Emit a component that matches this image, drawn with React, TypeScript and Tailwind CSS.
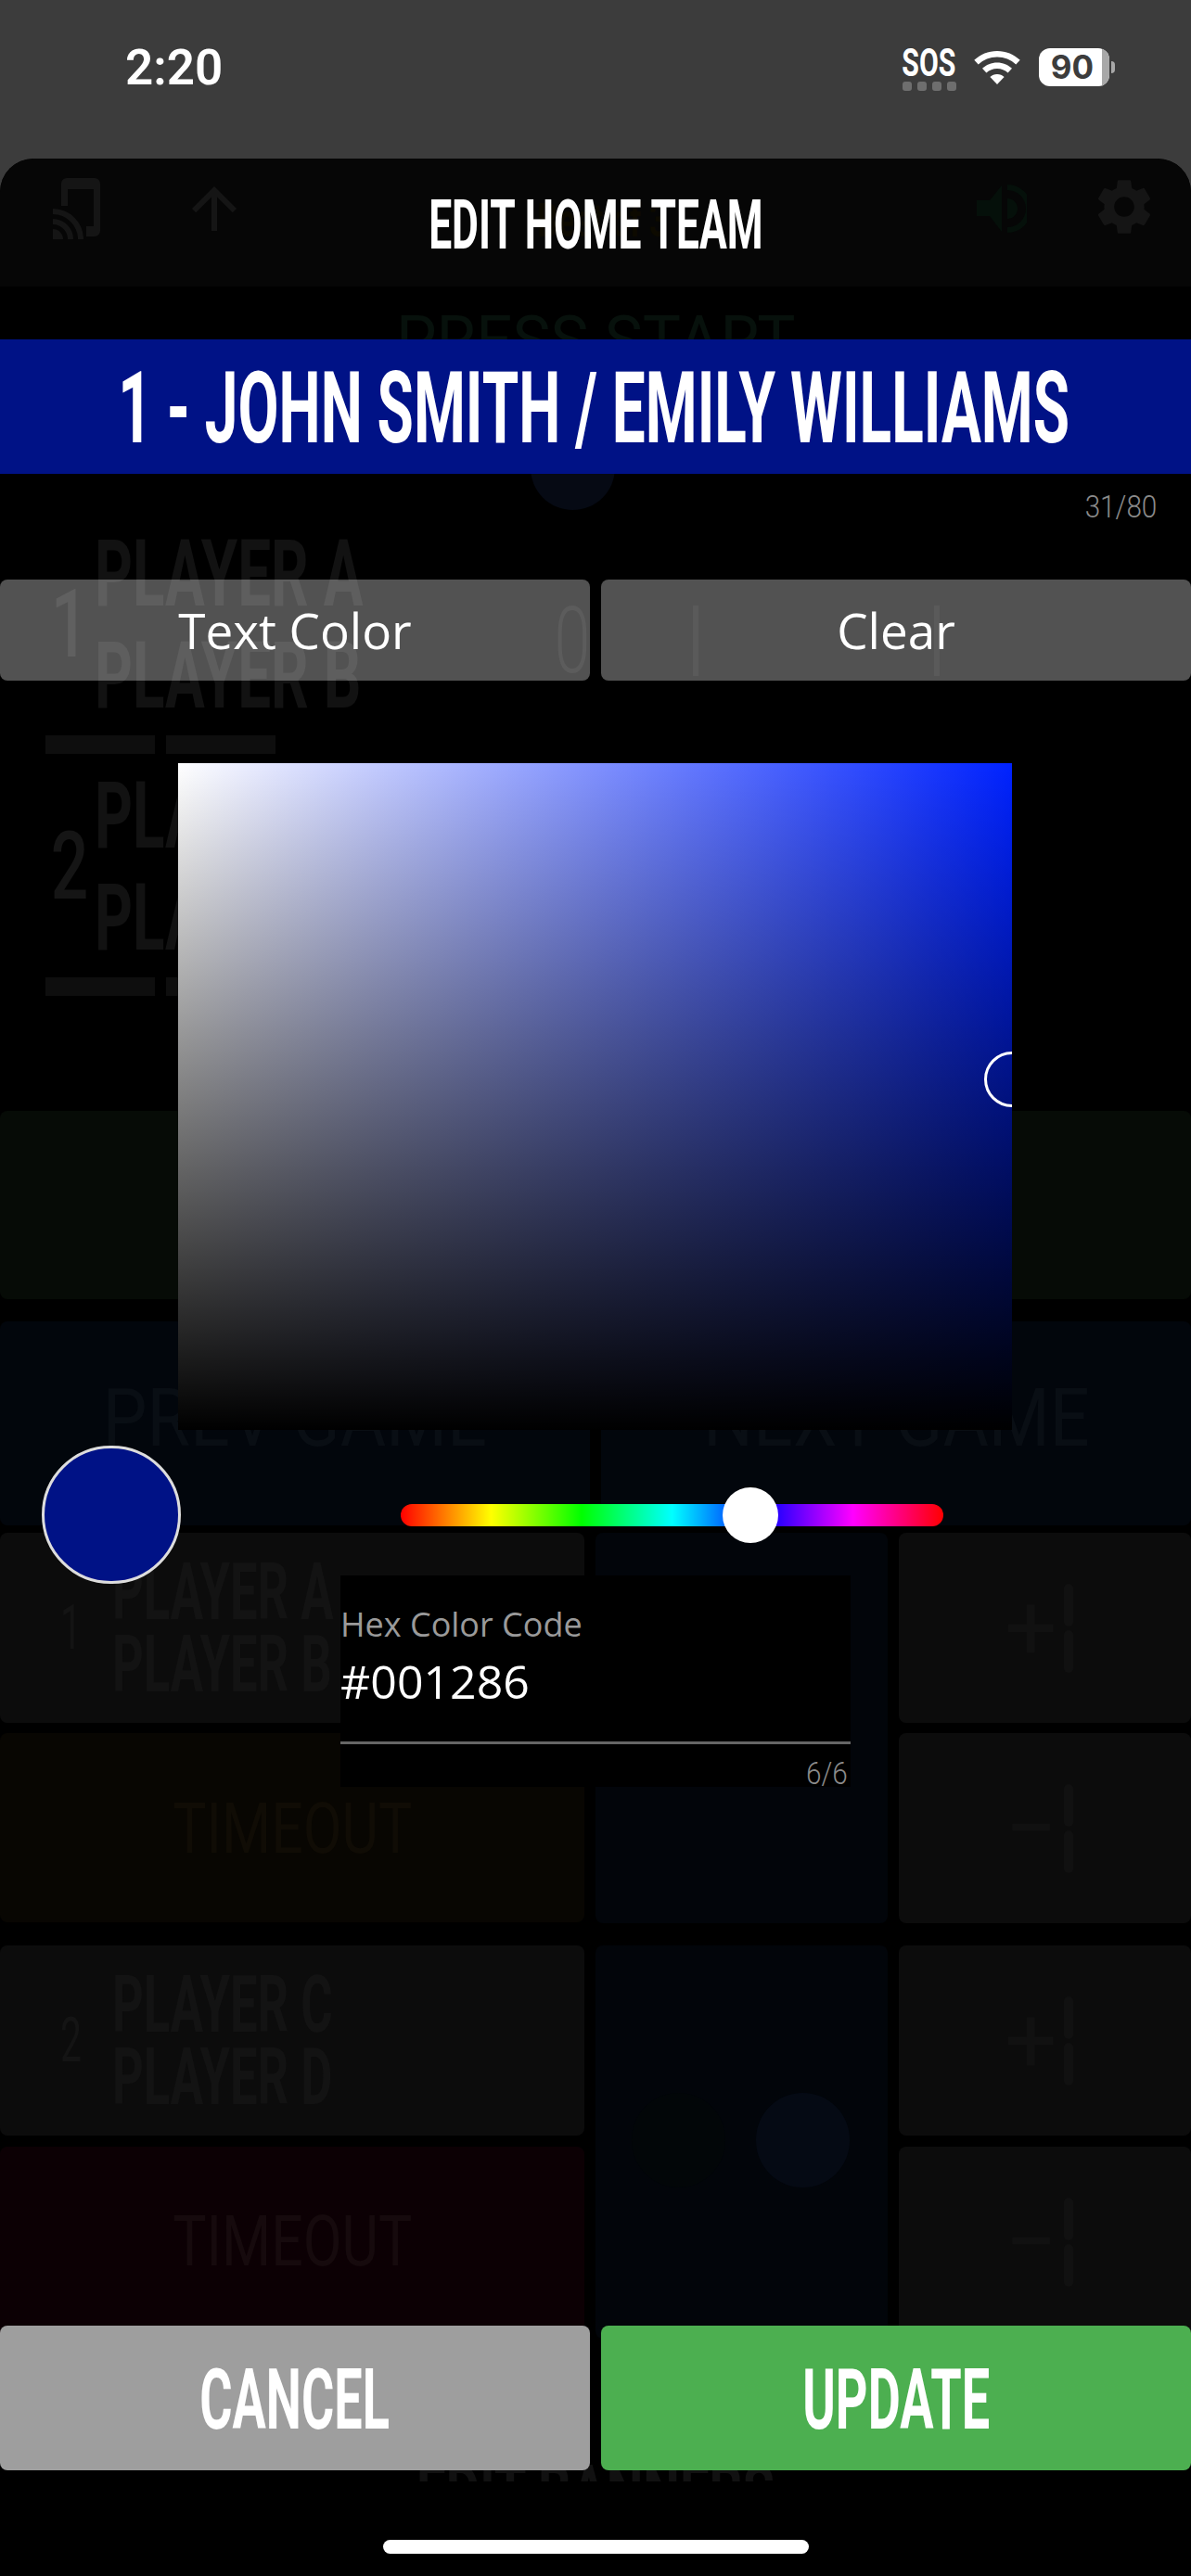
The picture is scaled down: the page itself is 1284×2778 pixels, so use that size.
import React from "react";
import { MdArrowUpward, MdSettings } from "react-icons/md";

function Sq({ className = "", children }: { className?: string; children: React.ReactNode }) {
  return <span className={"inline-block whitespace-nowrap origin-center font-['Roboto',sans-serif] font-bold " + className}>{children}</span>;
}

function CastMobile() {
  return (
    <svg width="51" height="66" viewBox="0 0 51 66" fill="#151515">
      <path d="M9 30V6a6 6 0 0 1 6-6h30a6 6 0 0 1 6 6v51a6 6 0 0 1-6 6h-9V52h8V12H16v18z" />
      <path d="M0 66V55a11 11 0 0 1 11 11z" />
      <path d="M0 44a22 22 0 0 1 22 22h-6A16 16 0 0 0 0 50z" />
      <path d="M0 33a33 33 0 0 1 33 33h-6A27 27 0 0 0 0 39z" />
    </svg>
  );
}

function Sound() {
  return (
    <svg width="54" height="52" viewBox="0 0 54 52" fill="#05100a">
      <path d="M0 17h14L27 1v50L14 34H0z" />
      <path d="M33 15a11 11 0 0 1 0 22z" />
      <path d="M33 0a26 26 0 0 1 0 52v-6a20 20 0 0 0 0-40z" />
    </svg>
  );
}

function Wifi() {
  return (
    <svg width="50" height="36" viewBox="0 0 50 36" fill="white">
      <path d="M25 0c9.500 0 18.200 3.700 24.700 9.800l-4.400 4.700A29.500 29.500 0 0 0 25 6.500 29.500 29.500 0 0 0 4.700 14.500L.3 9.800C6.800 3.700 15.500 0 25 0z" />
      <path d="M25 12.500c6.200 0 11.800 2.400 16 6.300l-4.400 4.700A17 17 0 0 0 25 19a17 17 0 0 0-11.600 4.500L9 18.800c4.200-3.900 9.800-6.300 16-6.300z" />
      <path d="M25 25c3 0 5.600 1.100 7.600 3L25 36l-7.600-8c2-1.900 4.600-3 7.600-3z" />
    </svg>
  );
}

function Panel({ className = "", children }: { className?: string; children?: React.ReactNode }) {
  return <div className={"rounded-[8px] overflow-hidden " + className}>{children}</div>;
}

function PlayerCard({ n, a, b }: { n: string; a: string; b: string }) {
  return (
    <Panel className="h-[205px] bg-[#0c0c0c] flex items-center pl-[60px]">
      <Sq className="w-[26px] text-[66px] text-[#141414] font-normal scale-x-[0.62]">{n}</Sq>
      <div className="ml-[35px] flex flex-col gap-[17px] items-start">
        <Sq className="text-[86px] leading-[61px] h-[61px] text-[#131313] font-black scale-x-[0.61] origin-left">{a}</Sq>
        <Sq className="text-[86px] leading-[61px] h-[61px] text-[#131313] font-black scale-x-[0.61] origin-left">{b}</Sq>
      </div>
    </Panel>
  );
}

function Delta({ label }: { label: string }) {
  return (
    <Panel className="h-[205px] bg-[#0c0c0c] flex items-center pl-[114px]">
      <Sq className="w-[56px] text-[100px] leading-none text-[#111111] font-normal">{label}</Sq>
      <div className="ml-[8px] flex flex-col gap-[4px]">
        <div className="w-[10px] h-[46px] rounded-full bg-[#111111]" />
        <div className="w-[10px] h-[46px] rounded-full bg-[#111111]" />
      </div>
    </Panel>
  );
}

function Digital({ className = "", children }: { className?: string; children: React.ReactNode }) {
  return <span className={"inline-block whitespace-nowrap font-['Roboto',sans-serif] font-light " + className}>{children}</span>;
}

function TeamBlock({ n, a, b }: { n: string; a: string; b: string }) {
  return (
    <div className="flex flex-col">
      <div className="flex items-center pl-[49px] h-[179px]">
        <Sq className="w-[38px] text-[102px] text-[#151515] font-medium scale-x-[0.7]">{n}</Sq>
        <div className="ml-[15px] w-[487px] flex flex-col gap-[40px] items-start">
          <Sq className="text-[100px] leading-[70px] h-[70px] text-[#121212] font-black scale-x-[0.637] origin-left">{a}</Sq>
          <Sq className="text-[100px] leading-[70px] h-[70px] text-[#121212] font-black scale-x-[0.637] origin-left">{b}</Sq>
        </div>
        <Digital className="w-[56px] mt-[34px] text-[100px] leading-none text-[#0f0f0f] scale-x-[0.7]">0</Digital>
        <div className="ml-[102px] mt-[34px] w-[6px] h-[76px] bg-[#0d0d0d]" />
        <div className="ml-[254px] mt-[34px] w-[6px] h-[76px] bg-[#0d0d0d]" />
      </div>
      <div className="flex gap-[12px] pl-[49px] mt-[30px]">
        <div className="w-[118px] h-[20px] bg-[#0e0e0e]" />
        <div className="w-[118px] h-[20px] bg-[#0e0e0e]" />
      </div>
    </div>
  );
}

function Backdrop() {
  return (
    <div className="absolute inset-0 flex flex-col">
      <div className="h-[171px] shrink-0" />
      <div className="flex-1 bg-black rounded-t-[36px] flex flex-col overflow-hidden">
        <div className="h-[138px] shrink-0 bg-[#060606] rounded-t-[36px] flex items-start">
          <div className="ml-[57px] mt-[21px]"><CastMobile /></div>
          <MdArrowUpward className="ml-[87px] mt-[18px]" size={72} color="#151515" />
          <div className="flex-1 flex justify-center mt-[30px] pr-[20px]">
            <Sq className="text-[50px] text-[#0d0a00] scale-x-[0.7]">Best of 3</Sq>
          </div>
          <div className="mr-[69px] mt-[28px]"><Sound /></div>
          <MdSettings className="mr-[36px] mt-[16px]" size={72} color="#151515" />
        </div>

        <div className="h-[70px] shrink-0 flex justify-center items-start pt-[24px]">
          <Digital className="text-[72px] leading-[70px] text-[#07110c] font-normal scale-x-[0.96]">PRESS START</Digital>
        </div>
        <div className="h-[171px] shrink-0 flex items-end">
          <div className="ml-[572px] w-[91px] h-[91px] rounded-full bg-[#060a14] flex items-center justify-center">
            <Sq className="text-[40px] text-[#0c1220] mt-[-40px]">1</Sq>
          </div>
          <Sq className="ml-[197px] mb-[20px] text-[46px] text-[#131313]">2</Sq>
          <Sq className="ml-[230px] mb-[20px] text-[46px] text-[#131313]">3</Sq>
        </div>

        <div className="h-[34px] shrink-0" />
        <TeamBlock n="1" a="PLAYER A" b="PLAYER B" />
        <div className="h-[32px] shrink-0" />
        <TeamBlock n="2" a="PLAYER C" b="PLAYER D" />

        <div className="h-[124px] shrink-0" />
        <Panel className="h-[203px] shrink-0 bg-[#060b06]" />
        <div className="h-[24px] shrink-0" />

        <div className="flex gap-[12px] h-[220px] shrink-0">
          <Panel className="flex-1 bg-[#02060c] flex justify-center pt-[69px]">
            <Digital className="text-[88px] leading-[70px] text-[#090e14] font-normal scale-x-[0.86]">PREV GAME</Digital>
          </Panel>
          <Panel className="flex-1 bg-[#02060c] flex justify-center pt-[69px]">
            <Digital className="text-[88px] leading-[70px] text-[#090e14] font-normal scale-x-[0.86]">NEXT GAME</Digital>
          </Panel>
        </div>

        <div className="h-[8px] shrink-0" />
        <div className="grid grid-cols-[630px_315px_315px] gap-x-[12px] h-[420px] shrink-0">
          <div className="flex flex-col gap-[11px]">
            <PlayerCard n="1" a="PLAYER A" b="PLAYER B" />
            <Panel className="h-[204px] bg-[#080602] flex justify-center pt-[74px]">
              <Digital className="text-[76px] leading-[58px] text-[#100c05] font-normal scale-x-[0.8]">TIMEOUT</Digital>
            </Panel>
          </div>
          <Panel className="bg-[#02050a]" />
          <div className="flex flex-col gap-[11px]">
            <Delta label="+" />
            <Delta label="−" />
          </div>
        </div>

        <div className="h-[25px] shrink-0" />
        <div className="grid grid-cols-[630px_315px_315px] gap-x-[12px] h-[423px] shrink-0">
          <div className="flex flex-col gap-[12px]">
            <PlayerCard n="2" a="PLAYER C" b="PLAYER D" />
            <Panel className="h-[207px] bg-[#0c0004] flex justify-center pt-[73px]">
              <Digital className="text-[76px] leading-[58px] text-[#160a0d] font-normal scale-x-[0.8]">TIMEOUT</Digital>
            </Panel>
          </div>
          <Panel className="bg-[#02050a] flex items-start pt-[159px] pl-[39px] gap-[33px]">
            <div className="w-[101px] h-[102px] rounded-full bg-[#020608]" />
            <div className="w-[101px] h-[102px] rounded-full bg-[#050a14]" />
          </Panel>
          <div className="flex flex-col gap-[12px]">
            <Delta label="+" />
            <Delta label="−" />
          </div>
        </div>

        <div className="h-[155px] shrink-0 flex justify-center items-start overflow-hidden">
          <Sq className="mt-[137px] text-[78px] leading-[60px] text-[#111111] font-black scale-x-[0.72]">EDIT BANNERS</Sq>
        </div>
      </div>
    </div>
  );
}

function StatusBar() {
  return (
    <div className="absolute left-0 right-0 top-0 h-[171px] flex items-start">
      <Sq className="ml-[135px] mt-[42px] text-[53px] leading-[62px] text-white font-semibold">2:20</Sq>
      <div className="ml-auto mt-[54px] flex flex-col items-center w-[61px] mr-[18px]">
        <Sq className="text-[42px] leading-[28px] h-[28px] text-white scale-x-[0.72]">SOS</Sq>
        <div className="mt-[6px] flex gap-[6px]">
          <div className="w-[10px] h-[10px] rounded-[3px] bg-[#6e6e6e]" />
          <div className="w-[10px] h-[10px] rounded-[3px] bg-[#6e6e6e]" />
          <div className="w-[10px] h-[10px] rounded-[3px] bg-[#6e6e6e]" />
          <div className="w-[10px] h-[10px] rounded-[3px] bg-[#6e6e6e]" />
        </div>
      </div>
      <div className="mt-[55px] mr-[20px]"><Wifi /></div>
      <div className="mt-[52px] flex items-center mr-[82px]">
        <div className="w-[76px] h-[41px] rounded-[12px] overflow-hidden bg-white flex">
          <div className="w-[68px] flex items-center justify-center">
            <span className="text-[35px] leading-none font-bold text-[#3c3c3c] font-['Inter',sans-serif] pl-[4px]">90</span>
          </div>
          <div className="w-[8px] bg-[#a8a8a8]" />
        </div>
        <div className="ml-[2px] w-[4px] h-[13px] rounded-r-full bg-[#a8a8a8]" />
      </div>
    </div>
  );
}

function Modal() {
  return (
    <div className="absolute left-0 right-0 top-[171px] bottom-0 flex flex-col">
      <div className="h-[138px] shrink-0 flex items-center justify-center pt-[6px]">
        <Sq className="text-[74px] leading-none text-white font-black scale-x-[0.6]">EDIT HOME TEAM</Sq>
      </div>
      <div className="mt-[57px] h-[145px] shrink-0 bg-[#001286] flex items-center justify-center pt-[3px] pr-[3px]">
        <Sq className="text-[107px] leading-none text-white font-black scale-x-[0.597]">1 - JOHN SMITH / EMILY WILLIAMS</Sq>
      </div>
      <div className="mt-[24px] h-[24px] flex justify-end pr-[37px]">
        <Digital className="text-[33px] leading-[24px] text-[#8a8a8a] scale-x-[0.9] origin-right">31/80</Digital>
      </div>
      <div className="mt-[66px] h-[109px] shrink-0 flex gap-[12px]">
        <button className="flex-1 rounded-[8px] bg-[#ffffff52] text-white text-[53px] font-['Open_Sans',sans-serif]">Text Color</button>
        <button className="flex-1 rounded-[8px] bg-[#ffffff52] text-white text-[53px] font-['Open_Sans',sans-serif]">Clear</button>
      </div>
      <div className="mt-[89px] self-center ml-[-1px] w-[899px] h-[719px] shrink-0 relative overflow-hidden bg-[linear-gradient(to_bottom,rgba(0,0,0,0),#000),linear-gradient(to_right,#fff,#0022ff)]">
        <div className="absolute right-[-30px] top-[311px] w-[60px] h-[60px] rounded-full border-[3px] border-white" />
      </div>
      <div className="mt-[17px] h-[149px] shrink-0 flex items-center pl-[45px]">
        <div className="w-[150px] h-[149px] rounded-full bg-[#001286] border-[3px] border-[#dddddd]" />
        <div className="ml-[237px] w-[585px] h-[24px] rounded-[12px] relative bg-[linear-gradient(to_right,#f00,#ff0,#0f0,#0ff,#00f,#f0f,#f00)]">
          <div className="absolute left-[347px] top-[-18px] w-[60px] h-[60px] rounded-full bg-white" />
        </div>
      </div>
      <div className="mt-[-9px] self-center w-[550px] h-[228px] shrink-0 bg-black flex flex-col">
        <span className="mt-[32px] text-[36px] leading-[42px] text-[#9a9a9a] font-['Open_Sans',sans-serif]">Hex Color Code</span>
        <span className="mt-[12px] text-[50px] leading-[56px] text-white font-['Open_Sans',sans-serif]">#001286</span>
        <div className="mt-[37px] h-[3px] shrink-0 bg-[#666666]" />
        <div className="mt-[20px] flex justify-end pr-[3px]">
          <Digital className="text-[33px] leading-[24px] text-[#8a8a8a] scale-x-[0.9] origin-right">6/6</Digital>
        </div>
      </div>
      <div className="mt-[581px] h-[156px] shrink-0 flex gap-[12px]">
        <button className="flex-1 rounded-[8px] bg-[#9e9e9e] flex items-center justify-center pt-[6px]">
          <Sq className="text-[90px] leading-none text-white font-black scale-x-[0.6]">CANCEL</Sq>
        </button>
        <button className="flex-1 rounded-[8px] bg-[#4caf50] flex items-center justify-center pt-[6px]">
          <Sq className="text-[90px] leading-none text-white font-black scale-x-[0.6]">UPDATE</Sq>
        </button>
      </div>
      <div className="mt-[75px] h-[15px] w-[459px] shrink-0 self-center rounded-full bg-white" />
    </div>
  );
}

export default function App() {
  return (
    <div className="relative w-[1284px] h-[2778px] overflow-hidden bg-[#3c3c3c]">
      <Backdrop />
      <StatusBar />
      <Modal />
    </div>
  );
}
